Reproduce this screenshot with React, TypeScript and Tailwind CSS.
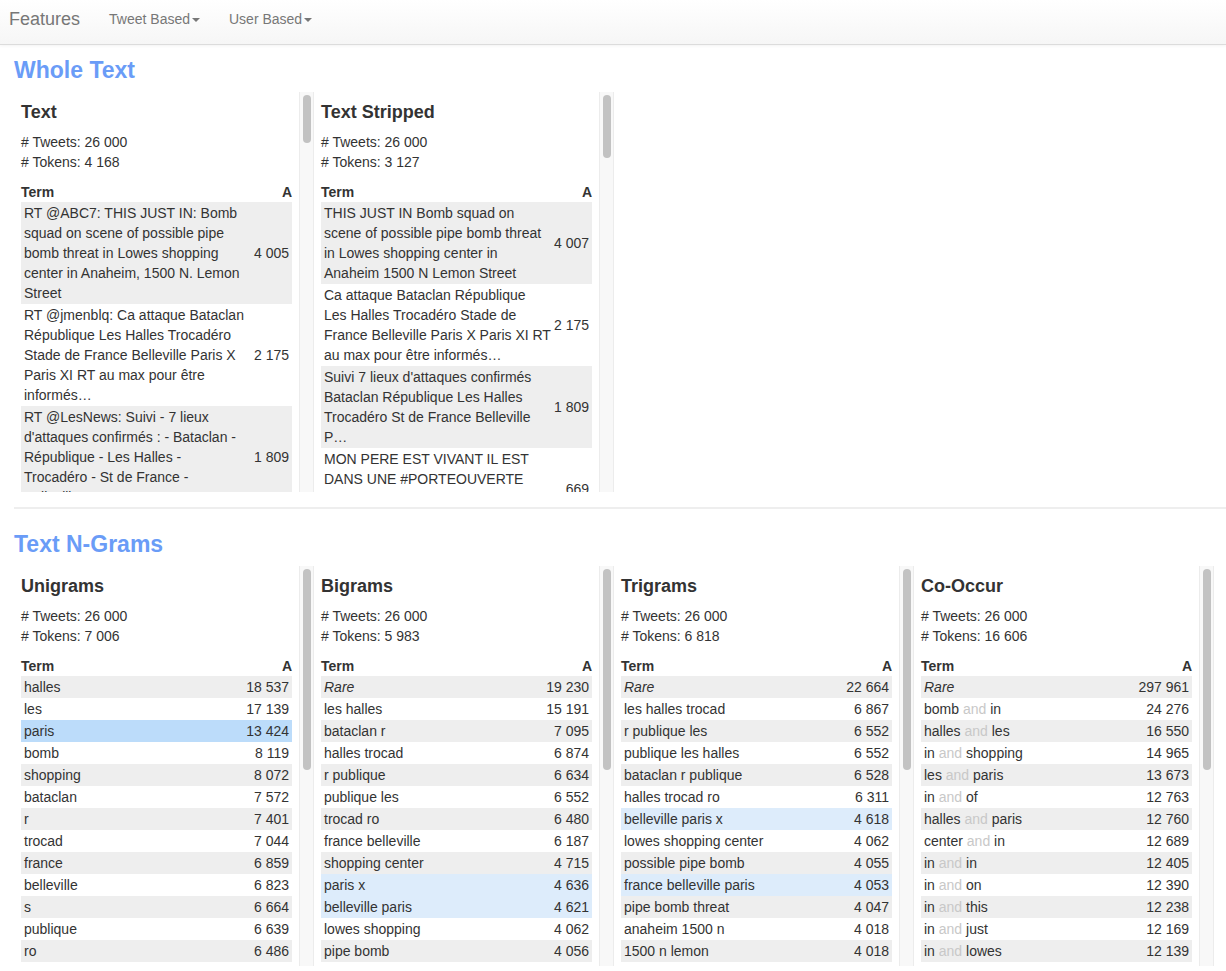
import React from 'react'

// ============================================
// TYPES
// ============================================

type Tone = 'blue' | 'sky'

interface Row {
  term: React.ReactNode
  count: string
  tone?: Tone
}

interface PanelProps {
  title: string
  tweets: string
  tokens: string
  rows: Row[]
  thumb: string
}

// Tweets wrap at fixed points, same as the source table
const lines = (...parts: string[]) => (
  <>
    {parts.map((p, i) => (
      <div key={i} className="whitespace-nowrap">
        {p}
      </div>
    ))}
  </>
)

// ============================================
// DATA
// ============================================

const wholeText: Row[] = [
  {
    term: lines(
      'RT @ABC7: THIS JUST IN: Bomb',
      'squad on scene of possible pipe',
      'bomb threat in Lowes shopping',
      'center in Anaheim, 1500 N. Lemon',
      'Street'
    ),
    count: '4 005',
  },
  {
    term: lines(
      'RT @jmenblq: Ca attaque Bataclan',
      'République Les Halles Trocadéro',
      'Stade de France Belleville Paris X',
      'Paris XI RT au max pour être',
      'informés…'
    ),
    count: '2 175',
  },
  {
    term: lines(
      'RT @LesNews: Suivi - 7 lieux',
      "d'attaques confirmés : - Bataclan -",
      'République - Les Halles -',
      'Trocadéro - St de France -',
      'Belleville - P…'
    ),
    count: '1 809',
  },
  { term: lines('RT @BFMTV: Fusillade à Paris'), count: '669' },
]

const textStripped: Row[] = [
  {
    term: lines(
      'THIS JUST IN Bomb squad on',
      'scene of possible pipe bomb threat',
      'in Lowes shopping center in',
      'Anaheim 1500 N Lemon Street'
    ),
    count: '4 007',
  },
  {
    term: lines(
      'Ca attaque Bataclan République',
      'Les Halles Trocadéro Stade de',
      'France Belleville Paris X Paris XI RT',
      'au max pour être informés…'
    ),
    count: '2 175',
  },
  {
    term: lines(
      "Suivi 7 lieux d'attaques confirmés",
      'Bataclan République Les Halles',
      'Trocadéro St de France Belleville',
      'P…'
    ),
    count: '1 809',
  },
  {
    term: lines('MON PERE EST VIVANT IL EST', 'DANS UNE #PORTEOUVERTE', 'MERCI A TOUS POUR VOS', 'MESSAGES'),
    count: '669',
  },
]

const rare = <span className="italic">Rare</span>

const unigrams: Row[] = [
  { term: 'halles', count: '18 537' },
  { term: 'les', count: '17 139' },
  { term: 'paris', count: '13 424', tone: 'blue' },
  { term: 'bomb', count: '8 119' },
  { term: 'shopping', count: '8 072' },
  { term: 'bataclan', count: '7 572' },
  { term: 'r', count: '7 401' },
  { term: 'trocad', count: '7 044' },
  { term: 'france', count: '6 859' },
  { term: 'belleville', count: '6 823' },
  { term: 's', count: '6 664' },
  { term: 'publique', count: '6 639' },
  { term: 'ro', count: '6 486' },
  { term: 'center', count: '6 310' },
]

const bigrams: Row[] = [
  { term: rare, count: '19 230' },
  { term: 'les halles', count: '15 191' },
  { term: 'bataclan r', count: '7 095' },
  { term: 'halles trocad', count: '6 874' },
  { term: 'r publique', count: '6 634' },
  { term: 'publique les', count: '6 552' },
  { term: 'trocad ro', count: '6 480' },
  { term: 'france belleville', count: '6 187' },
  { term: 'shopping center', count: '4 715' },
  { term: 'paris x', count: '4 636', tone: 'sky' },
  { term: 'belleville paris', count: '4 621', tone: 'sky' },
  { term: 'lowes shopping', count: '4 062' },
  { term: 'pipe bomb', count: '4 056' },
  { term: 'bomb threat', count: '4 047' },
]

const trigrams: Row[] = [
  { term: rare, count: '22 664' },
  { term: 'les halles trocad', count: '6 867' },
  { term: 'r publique les', count: '6 552' },
  { term: 'publique les halles', count: '6 552' },
  { term: 'bataclan r publique', count: '6 528' },
  { term: 'halles trocad ro', count: '6 311' },
  { term: 'belleville paris x', count: '4 618', tone: 'sky' },
  { term: 'lowes shopping center', count: '4 062' },
  { term: 'possible pipe bomb', count: '4 055' },
  { term: 'france belleville paris', count: '4 053', tone: 'sky' },
  { term: 'pipe bomb threat', count: '4 047' },
  { term: 'anaheim 1500 n', count: '4 018' },
  { term: '1500 n lemon', count: '4 018' },
  { term: 'n lemon street', count: '4 017' },
]

const pair = (a: string, b: string) => (
  <>
    {a} <span className="text-[#c8c8c8]">and</span> {b}
  </>
)

const coOccur: Row[] = [
  { term: rare, count: '297 961' },
  { term: pair('bomb', 'in'), count: '24 276' },
  { term: pair('halles', 'les'), count: '16 550' },
  { term: pair('in', 'shopping'), count: '14 965' },
  { term: pair('les', 'paris'), count: '13 673' },
  { term: pair('in', 'of'), count: '12 763' },
  { term: pair('halles', 'paris'), count: '12 760' },
  { term: pair('center', 'in'), count: '12 689' },
  { term: pair('in', 'in'), count: '12 405' },
  { term: pair('in', 'on'), count: '12 390' },
  { term: pair('in', 'this'), count: '12 238' },
  { term: pair('in', 'just'), count: '12 169' },
  { term: pair('in', 'lowes'), count: '12 139' },
  { term: pair('bomb', 'on'), count: '12 020' },
]

// ============================================
// PANEL
// ============================================

function rowBg(row: Row, i: number) {
  if (row.tone === 'blue') return 'bg-[#bcdcfa]'
  if (row.tone === 'sky') return 'bg-[#ddecfb]'
  return i % 2 === 0 ? 'bg-[#eeeeee]' : 'bg-white'
}

function Panel({ title, tweets, tokens, rows, thumb }: PanelProps) {
  return (
    <div className="w-[300px] h-[400px] flex shrink-0">
      <div className="w-[285px] px-[7px] overflow-hidden">
        <h4 className="mt-[10px] mb-[10px] text-[18px] leading-[20px] font-bold">{title}</h4>
        <p className="mb-[10px]">
          # Tweets: {tweets}
          <br /># Tokens: {tokens}
        </p>
        <div className="flex justify-between font-bold h-[20px]">
          <span>Term</span>
          <span>A</span>
        </div>
        {rows.map((row, i) => (
          <div key={i} className={`flex items-center py-px ${rowBg(row, i)}`}>
            <div className="flex-1 min-w-0 px-[3px]">{row.term}</div>
            <div className="px-[3px] whitespace-nowrap text-right">{row.count}</div>
          </div>
        ))}
      </div>

      {/* Fake scrollbar */}
      <div className="w-[15px] h-full border-l border-r border-[#ececec] bg-[#f8f8f8] pt-[3px] pl-[3px]">
        <div className={`w-[8px] rounded-full bg-[#c2c2c2] ${thumb}`} />
      </div>
    </div>
  )
}

// ============================================
// APP
// ============================================

export default function App() {
  return (
    <div className="min-h-screen bg-white text-[#333] text-[14px] leading-[20px] font-['Liberation_Sans',Arial,sans-serif]">
      {/* Navbar */}
      <nav className="h-[45px] pb-[6px] flex items-center bg-linear-to-b from-white to-[#f6f6f6] border-b border-[#dcdcdc] shadow-[0_1px_3px_rgba(0,0,0,0.05)] text-[#777]">
        <span className="ml-[9px] text-[18px] leading-[20px]">Features</span>
        <span className="ml-[29px] flex items-center">
          Tweet Based
          <span className="ml-[2px] mt-px border-x-[4px] border-x-transparent border-t-[4px] border-t-[#777]" />
        </span>
        <span className="ml-[29px] flex items-center">
          User Based
          <span className="ml-[2px] mt-px border-x-[4px] border-x-transparent border-t-[4px] border-t-[#777]" />
        </span>
      </nav>

      <main className="pl-[14px]">
        {/* Whole Text */}
        <h2 className="mt-[12px] mb-[9px] text-[23px] leading-[26px] font-bold text-[#6a9cf7]">Whole Text</h2>
        <div className="flex">
          <Panel title="Text" tweets="26 000" tokens="4 168" rows={wholeText} thumb="h-[48px]" />
          <Panel title="Text Stripped" tweets="26 000" tokens="3 127" rows={textStripped} thumb="h-[63px]" />
        </div>

        <div className="mt-[15px] h-[2px] bg-[#eeeeee]" />

        {/* Text N-Grams */}
        <h2 className="mt-[22px] mb-[9px] text-[23px] leading-[26px] font-bold text-[#6a9cf7]">Text N-Grams</h2>
        <div className="flex">
          <Panel title="Unigrams" tweets="26 000" tokens="7 006" rows={unigrams} thumb="h-[201px]" />
          <Panel title="Bigrams" tweets="26 000" tokens="5 983" rows={bigrams} thumb="h-[201px]" />
          <Panel title="Trigrams" tweets="26 000" tokens="6 818" rows={trigrams} thumb="h-[201px]" />
          <Panel title="Co-Occur" tweets="26 000" tokens="16 606" rows={coOccur} thumb="h-[201px]" />
        </div>
      </main>
    </div>
  )
}
